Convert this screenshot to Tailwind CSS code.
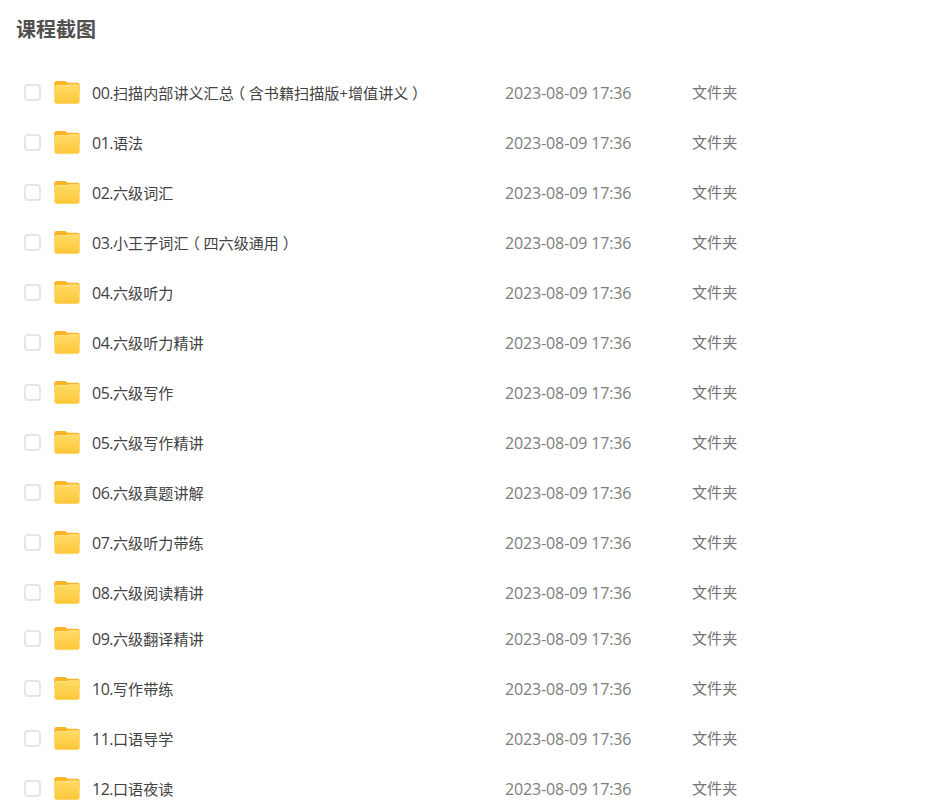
<!DOCTYPE html>
<html lang="zh-CN">
<head>
    <meta charset="UTF-8" />
    <title>课程截图</title>
    <script src="https://cdn.jsdelivr.net/npm/@tailwindcss/browser@4"></script>
</head>
<body class="bg-white h-screen overflow-hidden font-['Open_Sans','Noto_Sans_CJK_SC',sans-serif]">
    <h1 class="h-[67px] pl-4 pt-[15px] text-[20px] leading-[30px] font-bold text-[#505050]">课程截图</h1>

    <!-- File list -->
    <ul id="fileList" class="text-[15.1px]"></ul>

    <!-- Shared folder colours -->
    <svg class="absolute w-0 h-0">
        <defs>
            <linearGradient id="front" x1="0" y1="0" x2="0" y2="1">
                <stop offset="0" stop-color="#ffdc68" />
                <stop offset="1" stop-color="#ffc637" />
            </linearGradient>
        </defs>
    </svg>

    <template id="row">
        <li class="flex items-center h-[50px] pl-6 whitespace-nowrap">
            <span class="w-[17px] h-[17px] shrink-0 rounded-[4px] border-2 border-[#e6e6e6] bg-white"></span>
            <svg class="w-[26px] h-6 ml-[13px] shrink-0" viewBox="0 0 26 24">
                <path fill="#f9b528" d="M.3 3.2Q.3 1 2.6 1H10.5Q12 1 12.8 2L13.4 2.7H23.2Q25.7 2.7 25.7 5V12H.3Z" />
                <path fill="url(#front)" d="M.4 7.5Q.4 5.2 2.8 5.2H11.6Q12.5 5.2 13.2 4.9T15 4.5H23.3Q25.7 4.5 25.7 6.9V21.2Q25.7 23.7 23.2 23.7H2.9Q.4 23.7 .4 21.2Z" />
                <path fill="none" stroke="#ffe58f" stroke-width=".7" d="M1.3 6.8Q1.8 5.6 3 5.6H11.6Q12.6 5.6 13.4 5.3T15 4.9H23.2Q24.5 4.9 25 6.1" />
            </svg>
            <span class="name w-[413px] ml-3 pt-0.5 text-[#424242]"></span>
            <span class="w-[187px] pt-0.5 text-[16px] tracking-[-0.13px] text-[#7d7d7d]">2023-08-09 17:36</span>
            <span class="text-[#737373]">文件夹</span>
        </li>
    </template>

    <script>
        const names = [
            '00.扫描内部讲义汇总（含书籍扫描版+增值讲义）',
            '01.语法',
            '02.六级词汇',
            '03.小王子词汇（四六级通用）',
            '04.六级听力',
            '04.六级听力精讲',
            '05.六级写作',
            '05.六级写作精讲',
            '06.六级真题讲解',
            '07.六级听力带练',
            '08.六级阅读精讲',
            '09.六级翻译精讲',
            '10.写作带练',
            '11.口语导学',
            '12.口语夜读'
        ];
        const list = document.getElementById('fileList');
        const template = document.getElementById('row');

        names.forEach((name, i) => {
            const row = template.content.cloneNode(true);
            // number prefix is a touch larger, brackets are centred in their cells
            row.querySelector('.name').innerHTML = name
                .replace(/^(\d+\.)/, '<span class="text-[16px] tracking-[-0.5px]">$1</span>')
                .replace(/[（）]/g, `<span class="inline-block w-[15px] text-center [font-feature-settings:'halt']">$&</span>`);
            if (i === 11) row.querySelector('li').classList.add('-mt-1');
            list.appendChild(row);
        });
    </script>
</body>
</html>
